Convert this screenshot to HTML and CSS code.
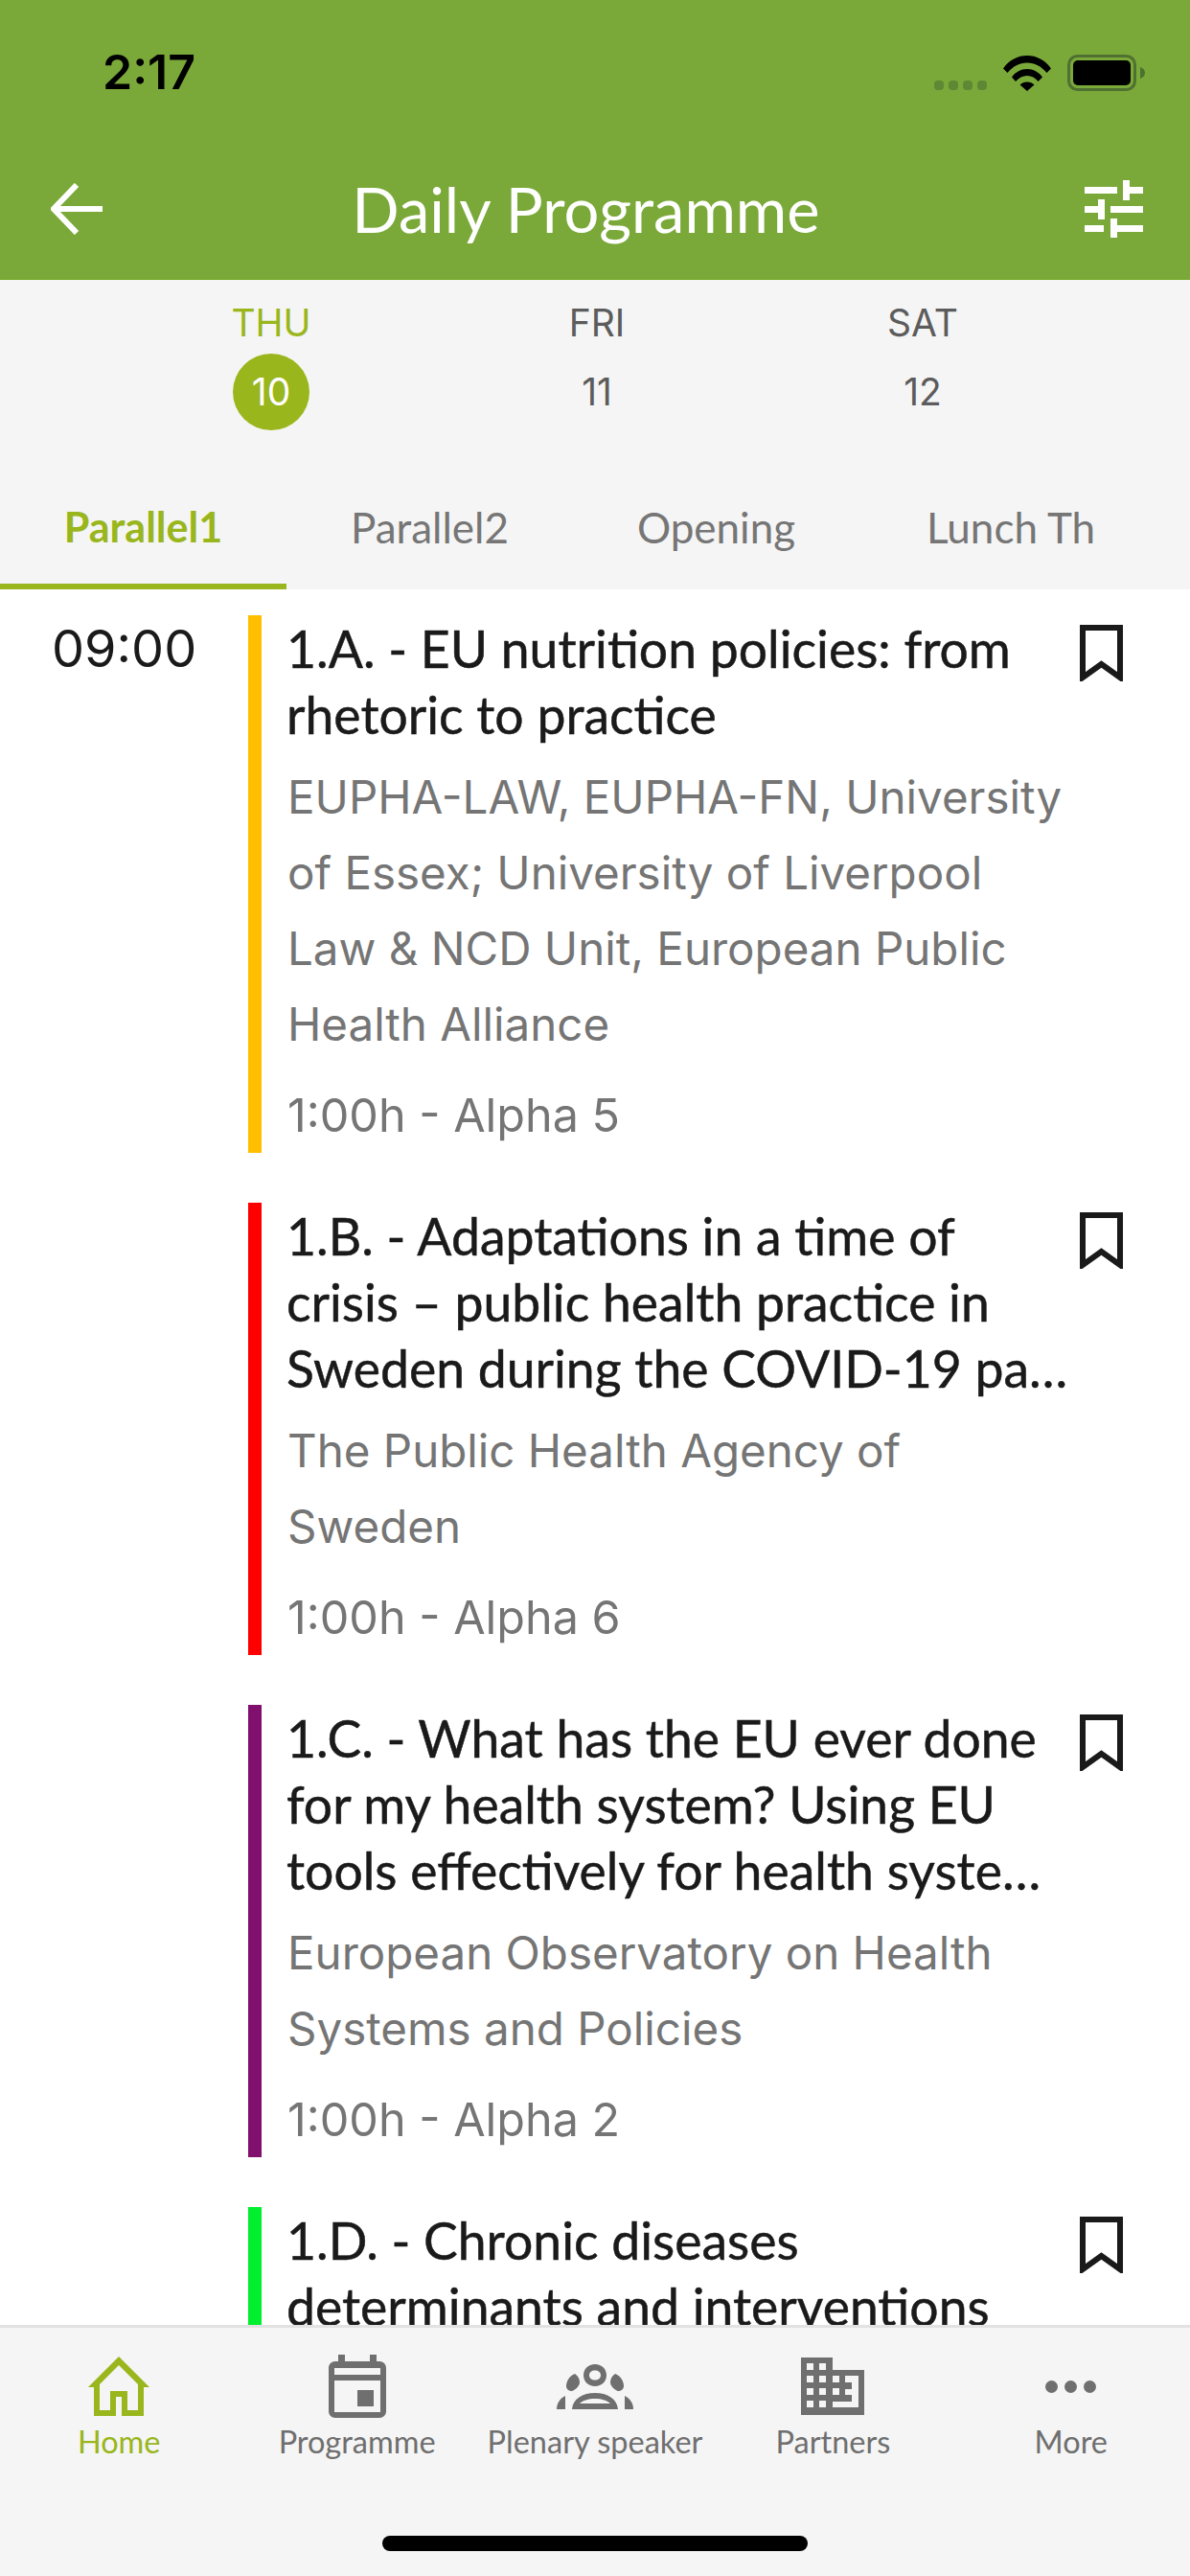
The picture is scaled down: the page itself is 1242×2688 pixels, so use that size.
FILE: index.html
```html
<!DOCTYPE html>
<html lang="en">
    <head>
        <meta charset="UTF-8">
        <meta name="viewport" content="width=device-width, initial-scale=1.0">
        <title>Daily Programme</title>
        <link rel="stylesheet" href="styles.css">
    </head>
    <body>
        <div class="app">
            <header class="header">
                <div class="status">
                    <span class="clock">2:17</span>
                    <div class="status-icons">
                        <div class="signal"><i></i><i></i><i></i><i></i></div>
                        <svg class="wifi" viewBox="0 0 50 37"><path d="M0 13.500C6.500 4.500 15 0 25 0s18.500 4.500 25 13.500l-4.500 4.500C39.500 11 33 7.500 25 7.500S10.500 11 4.500 18z"/><path d="M9 22.500C13 17 18.500 14 25 14s12 3 16 8.500l-4.500 4.500C33.500 23 29.500 21 25 21s-8.500 2-12 6z"/><path d="M17.500 30.500C19.500 28.500 22 27.500 25 27.500s5.500 1 7.500 3L25 37z"/></svg>
                        <svg class="battery" viewBox="0 0 81 38"><rect x="1.500" y="1.500" width="69" height="35" rx="9" fill="none" stroke="#4f7030" stroke-width="3"/><rect x="6" y="6" width="60" height="26" rx="5"/><path d="M76 13c3 1 5 3 5 6s-2 5-5 6z" fill="#4f7030"/></svg>
                    </div>
                </div>
                <div class="navbar">
                    <svg class="back" viewBox="0 0 54 54"><path d="M27 2L3 27l24 25M3 27h51" fill="none" stroke="#fff" stroke-width="6"/></svg>
                    <h1>Daily Programme</h1>
                    <svg class="filter" viewBox="0 0 61 60"><path d="M0 7h34v7H0zM47 7h14v7H47zM40 0h7v21h-7zM0 27h14v7H0zM27 27h34v7H27zM14 20h7v21h-7zM0 47h20v7H0zM34 47h27v7H34zM27 40h7v20h-7z" fill="#fff"/></svg>
                </div>
            </header>

            <div class="days">
                <div class="day active"><span class="day-name">THU</span><span class="day-num">10</span></div>
                <div class="day"><span class="day-name">FRI</span><span class="day-num">11</span></div>
                <div class="day"><span class="day-name">SAT</span><span class="day-num">12</span></div>
            </div>

            <div class="tabs">
                <div class="tab active">Parallel1</div>
                <div class="tab">Parallel2</div>
                <div class="tab">Opening</div>
                <div class="tab tab-last">Lunch Th</div>
            </div>

            <main class="list">
                <div class="row">
                    <div class="time">09:00</div>
                    <div class="bar bar-yellow"></div>
                    <div class="info">
                        <div class="name">1.A. - EU nutrition policies: from<br>rhetoric to practice</div>
                        <div class="org">EUPHA-LAW, EUPHA-FN, University<br>of Essex; University of Liverpool<br>Law &amp; NCD Unit, European Public<br>Health Alliance</div>
                        <div class="place">1:00h - Alpha 5</div>
                    </div>
                    <svg class="mark" viewBox="0 0 45 59"><path d="M3 3h39v52L22.500 41 3 55z" fill="none" stroke="#1a1a1a" stroke-width="6"/></svg>
                </div>
                <div class="row">
                    <div class="time"></div>
                    <div class="bar bar-red"></div>
                    <div class="info">
                        <div class="name">1.B. - Adaptations in a time of<br>crisis – public health practice in<br>Sweden during the COVID-19 pa…</div>
                        <div class="org">The Public Health Agency of<br>Sweden</div>
                        <div class="place">1:00h - Alpha 6</div>
                    </div>
                    <svg class="mark" viewBox="0 0 45 59"><path d="M3 3h39v52L22.500 41 3 55z" fill="none" stroke="#1a1a1a" stroke-width="6"/></svg>
                </div>
                <div class="row">
                    <div class="time"></div>
                    <div class="bar bar-purple"></div>
                    <div class="info">
                        <div class="name">1.C. - What has the EU ever done<br>for my health system? Using EU<br>tools effectively for health syste…</div>
                        <div class="org">European Observatory on Health<br>Systems and Policies</div>
                        <div class="place">1:00h - Alpha 2</div>
                    </div>
                    <svg class="mark" viewBox="0 0 45 59"><path d="M3 3h39v52L22.500 41 3 55z" fill="none" stroke="#1a1a1a" stroke-width="6"/></svg>
                </div>
                <div class="row">
                    <div class="time"></div>
                    <div class="bar bar-green"></div>
                    <div class="info">
                        <div class="name">1.D. - Chronic diseases<br>determinants and interventions</div>
                    </div>
                    <svg class="mark" viewBox="0 0 45 59"><path d="M3 3h39v52L22.500 41 3 55z" fill="none" stroke="#1a1a1a" stroke-width="6"/></svg>
                </div>
            </main>

            <nav class="tabbar">
                <div class="nav-items">
                    <div class="nav-item active">
                        <div class="nav-icon">
                            <svg class="ic-home" viewBox="0 0 64 62"><path d="M32 0L64 32h-6v30H35V42h-6v20H6V32H0zM32 9L12 29v27h11V36h18v20h11V29z" fill="#99b61c" fill-rule="evenodd"/></svg>
                        </div>
                        <span>Home</span>
                    </div>
                    <div class="nav-item">
                        <div class="nav-icon">
                            <svg class="ic-cal" viewBox="0 0 60 66"><path d="M10 0h7v7h26V0h7v7h3c4 0 7 3 7 7v45c0 4-3 7-7 7H7c-4 0-7-3-7-7V14c0-4 3-7 7-7h3zM6 14v7h48v-7zM6 27v33h48V27zM30 37h17v17H30z" fill="#6f6f6f" fill-rule="evenodd"/></svg>
                        </div>
                        <span>Programme</span>
                    </div>
                    <div class="nav-item">
                        <div class="nav-icon">
                            <svg class="ic-group" viewBox="0 0 80 47"><path d="M40 0c7 0 12 5 12 11.500S47 23 40 23 28 18 28 11.500 33 0 40 0zm0 6.500c-3.500 0-6 2-6 5s2.500 5 6 5 6-2 6-5-2.500-5-6-5zM19 10c-6 2-9 8-9 13 0 3 3 5 6 5 3-1 8-5 8-9 0-4-2-7-5-9zM61 10c6 2 9 8 9 13 0 3-3 5-6 5-3-1-8-5-8-9 0-4 2-7 5-9zM9 33C3 36 0 41 0 47h9c0-5 0-10 0-14zM71 33c6 3 9 8 9 14h-9c0-5 0-10 0-14zM40 30c13 0 23 6 24 17H16c1-11 11-17 24-17zm0 6c-7 0-13 2-16 5h32c-3-3-9-5-16-5z" fill="#6f6f6f" fill-rule="evenodd"/></svg>
                        </div>
                        <span>Plenary speaker</span>
                    </div>
                    <div class="nav-item">
                        <div class="nav-icon">
                            <svg class="ic-build" viewBox="0 0 66 60"><path d="M0 0h33v13h33v47H0zM6 6v7h7V6zM19 6v7h7V6zM6 19v7h7v-7zM19 19v7h7v-7zM6 32v7h7v-7zM19 32v7h7v-7zM6 45v7h7v-7zM19 45v7h7v-7zM33 26h7v-7h-7zM33 39h7v-7h-7zM33 52h27V19H46v7h7v7h-7v6h7v7H33z" fill="#6f6f6f" fill-rule="evenodd"/></svg>
                        </div>
                        <span>Partners</span>
                    </div>
                    <div class="nav-item">
                        <div class="nav-icon">
                            <svg class="ic-more" viewBox="0 0 53 13"><circle cx="6.500" cy="6.500" r="6.500" fill="#6f6f6f"/><circle cx="26.500" cy="6.500" r="6.500" fill="#6f6f6f"/><circle cx="46.500" cy="6.500" r="6.500" fill="#6f6f6f"/></svg>
                        </div>
                        <span>More</span>
                    </div>
                </div>
                <div class="home-bar"></div>
            </nav>
        </div>
    </body>
</html>
```

FILE: styles.css
```css
html,body{
    margin:0;
    padding:0;
    background:#fff;
}
.app{
    width:1242px;
    height:2688px;
    display:flex;
    flex-direction:column;
    overflow:hidden;
    font-family:'Lato',sans-serif;
}

/* header */
.header{
    height:291px;
    background:#7aa93a;
    border-bottom:1px solid #6fa51a;
    flex:none;
}
.status{
    height:150px;
    padding:0 47px 0 107px;
    display:flex;
    justify-content:space-between;
    align-items:flex-start;
}
.clock{
    font-family:'Inter',sans-serif;
    font-weight:600;
    font-size:50px;
    line-height:56px;
    margin-top:47px;
    color:#000;
}
.status-icons{
    display:flex;
    align-items:flex-end;
    margin-top:57px;
}
.signal{
    display:flex;
    gap:5px;
    margin-bottom:1px;
}
.signal i{
    width:10px;
    height:10px;
    border-radius:4px;
    background:#5f8734;
}
.wifi{
    width:50px;
    height:37px;
    margin-left:17px;
}
.battery{
    width:81px;
    height:38px;
    margin-left:17px;
}
.navbar{
    height:141px;
    padding:0 49px 0 53px;
    display:flex;
    justify-content:space-between;
    align-items:flex-start;
}
.navbar h1{
    margin:30px 16px 0 0;
    font-weight:400;
    font-size:65px;
    line-height:76px;
    color:#fff;
}
.back{
    width:54px;
    height:54px;
    margin-top:41px;
}
.filter{
    width:61px;
    height:60px;
    margin-top:38px;
}

/* day picker */
.days{
    height:210px;
    background:#f5f5f5;
    padding:0 0 0 113px;
    display:flex;
    flex:none;
}
.day{
    width:340px;
    display:flex;
    flex-direction:column;
    align-items:center;
    font-family:'Inter',sans-serif;
    color:#5c5c5c;
}
.day-name{
    font-size:39px;
    line-height:46px;
    margin-top:22px;
}
.day-num{
    width:80px;
    height:80px;
    margin-top:9px;
    border-radius:50%;
    font-size:39px;
    line-height:80px;
    text-align:center;
}
.day.active .day-name{
    color:#99b61c;
}
.day.active .day-num{
    background:#99b61c;
    color:#fff;
}

/* sub tabs */
.tabs{
    height:113px;
    background:#f5f5f5;
    display:flex;
    flex:none;
}
.tab{
    width:299px;
    height:113px;
    box-sizing:border-box;
    padding-top:19px;
    text-align:center;
    font-size:44px;
    line-height:58px;
    color:#767676;
}
.tab.active{
    color:#99b61c;
    font-size:43px;
    font-weight:700;
    border-bottom:6px solid #99b61c;
}
.tab-last{
    width:316px;
}

/* session list */
.list{
    flex:1;
    min-height:0;
    overflow:hidden;
    padding-top:27px;
}
.row{
    display:flex;
    align-items:stretch;
    margin-bottom:52px;
}
.time{
    width:205px;
    padding-left:54px;
    font-family:'Inter',sans-serif;
    font-size:54px;
    line-height:70px;
    color:#1a1a1a;
}
.bar{
    width:14px;
    flex:none;
}
.bar-yellow{background:#ffbf00;}
.bar-red{background:#ff0000;}
.bar-purple{background:#800f6e;}
.bar-green{background:#00ef2f;}
.info{
    width:827px;
    margin-left:27px;
    flex:none;
}
.name{
    margin-left:-1px;
    font-size:53.500px;
    line-height:69px;
    color:#1a1a1a;
    white-space:nowrap;
    -webkit-text-stroke:0.5px #1a1a1a;
}
.org{
    margin-top:12px;
    font-family:'Inter',sans-serif;
    font-size:47.500px;
    line-height:79px;
    color:#757575;
    white-space:nowrap;
}
.place{
    margin-top:16px;
    font-family:'Inter',sans-serif;
    font-size:48.500px;
    line-height:79px;
    color:#757575;
}
.mark{
    width:45px;
    height:59px;
    margin-top:10px;
    flex:none;
}

/* bottom nav */
.tabbar{
    height:259px;
    flex:none;
    background:#f5f5f5;
    border-top:3px solid #e2e2e2;
    display:flex;
    flex-direction:column;
    align-items:center;
}
.nav-items{
    width:100%;
    display:flex;
    padding-top:28px;
}
.nav-item{
    flex:1;
    display:flex;
    flex-direction:column;
    align-items:center;
    color:#6f6f6f;
    font-size:32.500px;
    line-height:40px;
}
.nav-icon{
    height:66px;
    margin-bottom:5px;
    display:flex;
    align-items:center;
}
.ic-home{width:64px;height:62px;}
.ic-cal{width:60px;height:66px;}
.ic-group{width:80px;height:47px;}
.ic-build{width:66px;height:60px;}
.ic-more{width:53px;height:13px;}
.nav-item span{
    white-space:nowrap;
}
.nav-item.active{
    color:#99b61c;
}
.home-bar{
    width:444px;
    height:16px;
    border-radius:8px;
    background:#000;
    margin-top:78px;
}
```
